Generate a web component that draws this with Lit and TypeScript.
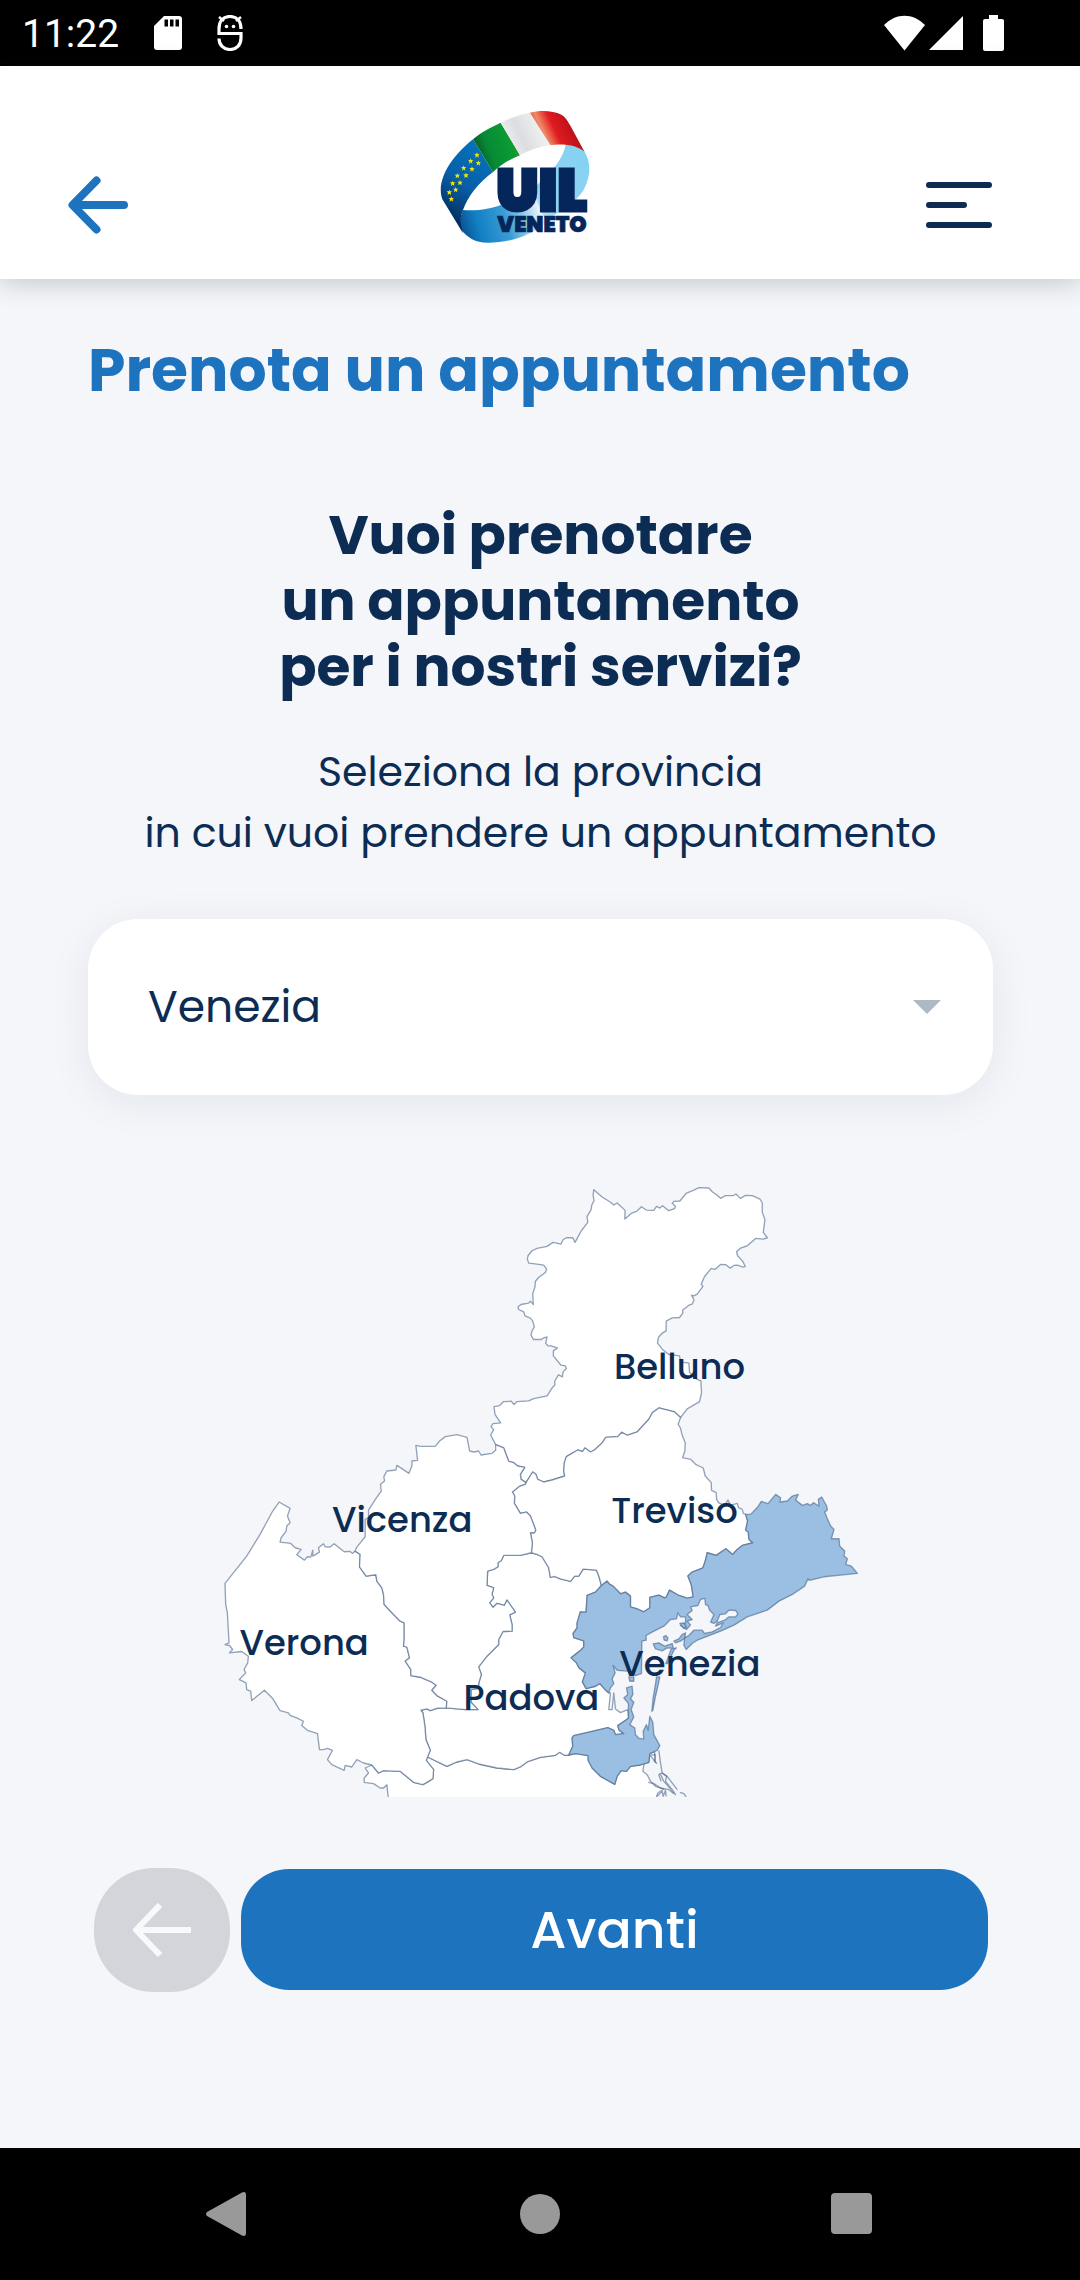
import { LitElement, html, svg, css } from "lit";
import { customElement, property, state } from "lit/decorators.js";

type Point = [number, number];

// The map is drawn on a 2040 x 1881 canvas; borders are listed per sheet and shifted into place.
const sheet = (dx: number, dy: number) => (text: string): Point[] =>
  text
    .trim()
    .split(/\s+/)
    .map((pair) => {
      const [x, y] = pair.split(",").map(Number);
      return [x + dx, y + dy] as Point;
    });
const nw = sheet(0, 0);
const ne = sheet(840, 0);
const sw = sheet(0, 930);
const se = sheet(960, 930);
const back = (points: Point[]): Point[] => [...points].reverse();
const toPoints = (...parts: Point[][]): string =>
  parts
    .flat()
    .map((p) => p.join(","))
    .join(" ");

const bellunoOuter = ne(`46,826 31,797 40,781 32,772 38,763 61,761 44,735 41,712 58,709 70,697 93,696 101,706 110,697 145,695
  160,688 200,680 216,655 223,648 223,636 234,617 246,623 248,608 258,598 255,590 242,588 219,560 219,545 231,536 212,530
  203,530 196,522 200,503 188,507 183,511 159,511 152,497 155,485 162,473 157,455 150,447 134,440 130,428 115,421 113,413
  122,406 145,402 150,396 159,406 157,375 164,352 165,337 174,326 195,310 199,300 190,288 170,285 145,282 141,270 143,260
  155,245 170,238 200,232 218,220 242,225 248,212 258,206 277,206 284,220 300,190 305,182 322,160 320,142 332,122 334,108
  341,95 338,80 340,62 365,84 388,98 400,108 410,102 434,124 433,150 442,142 452,133 470,126 483,113 497,123 520,124
  528,112 538,117 546,110 565,125 582,119 585,112 575,103 580,97 598,96 618,72 640,63 655,56 685,57 695,68 708,77 720,88
  735,80 758,80 766,75 779,88 795,79 815,80 838,90 845,102 845,130 853,152 850,175 848,190 860,206 848,210 825,208
  800,230 780,237 768,248 771,260 786,276 794,292 788,294 770,288 760,289 748,297 736,287 720,286 703,301 692,298
  672,322 662,345 667,352 650,375 640,380 633,378 640,392 636,404 624,409 606,423 607,432 597,445 575,446 557,456
  557,485 545,492 534,504 531,522 545,540 565,556 597,560 600,578 625,582 627,610 648,630 661,635 663,670 657,697
  620,719 600,745`);
const bellunoTreviso = ne(`600,745 582,728 535,716 516,730 505,750 470,788 440,798 424,789 412,802 376,804 364,822
  342,842 330,848 314,836 306,847 292,842 258,862 252,880 250,905 253,920 215,932 190,938 172,930 166,914 157,908 137,940`);
const bellunoVicenza = ne(`137,940 122,930 120,915 133,894 112,890 100,880 85,876 70,836 46,826`);
const trevisoOuter = [
  ...ne(`600,745 593,765 600,777 605,798 614,820 613,845 606,865 630,870 645,885 668,896 674,920 692,940`),
  ...se(`573,33 587,40 588,60 594,70 605,75 616,72 622,62 630,78 650,72 654,85 665,90 668,102 675,105`),
];
const trevisoVenezia = se(`675,105 681,125 675,152 683,158 685,180 697,190 665,198 650,210 636,225 616,208 587,228
  560,220 554,245 547,265 515,278 502,290 512,315 518,352 500,356 475,348 447,332 438,352 432,355 415,347 388,354 388,385
  370,397 350,388 330,382 330,350 315,338 300,343 278,320 268,315 260,305 243,318`);
const trevisoPadova = se(`243,318 236,292 228,272 188,269 175,290 163,290 150,306 120,298 102,291 90,294 85,265 65,232
  50,225 33,220`);
const trevisoVicenza = sw(`993,220 996,190 990,160 1002,160 1006,152 990,110 978,98 960,102 942,72 943,50 936,38 958,20
  975,14 977,10`);
const vicenzaPadova = sw(`993,220 960,228 910,228 903,243 893,250 893,262 880,270 862,275 860,318 880,325 875,345 880,355
  868,370 878,384 890,372 912,378 920,362 945,398 928,406 935,435 935,455 908,456 895,480 895,495 860,530 835,562
  843,585 835,612 835,626 812,630 812,668 833,690 795,690 738,685`);
const vicenzaVerona = sw(`738,685 740,665 710,648 695,632 708,617 695,608 660,593 632,588 632,570 615,545 628,535 620,503
  610,500 612,480 612,430 600,425 580,405 552,375 550,345 545,325 530,305 527,286 498,290 478,262 480,225 465,215`);
const vicenzaOuter = [
  ...sw(`465,215 470,203 495,172 495,120 505,115 505,92`),
  ...nw(`527,988 543,965 541,945 553,935 551,922 560,905 587,902 590,888 604,897 626,912 635,890 635,875 652,873 647,828
  660,831 705,831 718,815 735,802 770,796 800,804 808,845 822,848 835,845 842,857 875,852 886,843 886,826`),
];
const veronaOuter = sw(`465,215 457,222 450,216 432,217 402,193 390,203 375,202 370,193 355,205 358,218 338,230 338,212
  332,233 322,232 313,242 290,226 303,210 285,205 272,192 240,188 243,175 258,155 260,140 270,130 262,110 270,87 237,68
  218,95 180,165 140,230 75,312 77,375 82,400 87,490 75,495 88,498 98,510 88,520 125,516 145,530 143,550 132,570 137,580
  118,600 138,610 140,630 152,635 155,663 193,632 218,657 240,693 265,700 270,707 290,715 310,725 305,738 322,752
  352,762 358,810 370,810 382,806 397,812 382,840 395,855 432,872 435,857 455,862 470,840 490,850 515,856`);
const veronaRovigo = sw(`515,856 535,880 550,873 600,875 618,890 640,908 668,915 680,908 698,897 700,870 678,842 682,832`);
const veronaPadova = sw(`682,832 690,812 677,780 674,740 668,700 662,692 680,688 690,693 710,686 738,685`);
const padovaRovigo = [
  ...sw(`682,832 740,860 770,847 800,840 835,853 890,865 940,870`),
  ...se(`0,862 20,847 60,833 105,827 118,818 132,827 145,826`),
];
const veneziaWest = se(`243,318 225,338 200,348 197,398 180,397 170,430 170,445 158,462 160,474 190,484 190,502 183,510
  152,535 168,550 176,565 195,580 186,607 197,627 225,620 238,612 252,628 265,640`);
const padovaCoast = se(`265,640 270,640 265,690 275,690 280,640 285,688 300,699 322,690 324,716 292,738 296,752 310,762
  285,765 280,752 262,744 215,755 160,768 155,775 157,800 145,826`);
const rovigoVenezia = se(`145,826 165,822 203,828 203,842 215,865 240,890 283,914 290,890 302,873 318,875 330,860
  360,856 385,848 388,822`);
const rovigoCoast = se(`388,822 402,816 405,848 390,828 370,855 367,875 380,885 390,905 405,920 430,928 412,940 405,960`);

const veneziaOuter = se(`675,105 690,105 712,82 722,66 742,73 765,45 780,55 778,68 800,65 815,50 833,45 825,62 845,78
  860,73 870,78 878,70 895,80 893,60 903,53 918,80 920,92 912,98 920,118 930,140 940,150 932,178 955,178 957,200 972,215
  970,230 980,238 975,255 992,260 1010,282 960,287 910,292 866,303 862,298 852,320 815,345 775,365 740,392 680,412
  640,437 600,455 530,482 515,492 497,510 490,497 492,475 505,468 520,452 545,452 552,462 575,457 600,444 608,430
  585,440 590,430 612,422 625,412 645,412 652,403 645,393 625,392 615,403 598,405 590,425 580,432
  570,428 580,405 567,392 562,378 555,376 553,357 540,360 532,378 510,382 515,393
  500,405 515,420 500,425 510,436 498,450 480,438 495,430 495,412 480,412 472,400 468,418 450,420 430,440 400,455 377,468
  377,482 364,485 363,582 345,588 330,575 310,574 290,572 278,558 284,580 275,598 280,612 270,625 265,640`);
const veneziaSouth = se(`145,826 157,800 155,775 160,768 215,755 262,744 280,752 285,765 310,762 296,752 292,738 324,716
  324,672 310,655 322,645 318,625 335,620 337,645 330,658 340,668 332,690 340,712 328,735 343,745 345,765 355,776
  370,778 368,755 378,735 383,752 388,710 397,728 400,765 418,798 410,812 388,822 385,848 360,856 330,860 318,875 302,873
  290,890 283,914 240,890 215,865 203,842 203,828 165,822`);
const islands = [
  se(`398,493 415,490 432,500 455,492 458,505 438,506 425,514 405,508`),
  se(`460,485 475,478 485,465 495,460 493,475 480,485 465,490`),
  se(`429,472 436,468 442,475 440,484 431,482`),
  se(`478,432 490,430 497,442 490,447`),
  se(`468,505 460,512 452,530 442,552 436,552 444,530 452,508`),
  se(`418,592 412,620 405,650 397,692 394,695 398,655 404,620 408,592`),
  se(`325,592 340,592 340,605 328,605`),
];
const delta = [
  se(`415,812 420,850 425,880 440,890 470,930`),
  se(`418,880 430,905 465,945 455,930 435,905 438,890 425,880 415,885 422,905`),
  se(`383,908 400,912 420,925 445,930 460,942`),
  se(`392,826 404,825 402,845 410,852`),
  se(`478,938 490,942 497,952`),
  se(`410,950 425,935 428,950 435,932 437,950`),
];

interface Province {
  name: string;
  shapes: string[];
  x: number;
  y: number;
}

const provinces: Province[] = [
  {
    name: "Belluno",
    shapes: [toPoints(bellunoOuter, bellunoTreviso, bellunoVicenza)],
    x: 1437,
    y: 628,
  },
  {
    name: "Padova",
    shapes: [toPoints(veneziaWest, padovaCoast, back(padovaRovigo), veronaPadova, back(vicenzaPadova), back(trevisoPadova))],
    x: 993,
    y: 1620,
  },
  {
    name: "Treviso",
    shapes: [toPoints(trevisoOuter, trevisoVenezia, trevisoPadova, trevisoVicenza, back(bellunoTreviso))],
    x: 1422,
    y: 1062,
  },
  {
    name: "Venezia",
    shapes: [
      toPoints(veneziaOuter, back(veneziaWest), back(trevisoVenezia)),
      toPoints(veneziaSouth),
      ...islands.map((i) => toPoints(i)),
    ],
    x: 1468,
    y: 1520,
  },
  {
    name: "Verona",
    shapes: [toPoints(veronaOuter, veronaRovigo, veronaPadova, vicenzaVerona)],
    x: 312,
    y: 1455,
  },
  {
    name: "Vicenza",
    shapes: [toPoints(vicenzaOuter, back(bellunoVicenza), back(trevisoVicenza), vicenzaPadova, vicenzaVerona)],
    x: 606,
    y: 1087,
  },
];

const rovigo = toPoints(
  sw(`572,980 563,945 560,915 550,925 540,925 520,912 492,908 492,895 505,880 495,865 515,856`),
  veronaRovigo,
  padovaRovigo,
  rovigoVenezia,
  rovigoCoast,
  se(`405,980`),
);

@customElement("status-bar")
export class StatusBar extends LitElement {
  static styles = css`
    :host {
      display: flex;
      align-items: center;
      justify-content: space-between;
      height: 66px;
      padding: 0 76px 0 22px;
      background: #000;
      color: #fff;
      font-family: Roboto, sans-serif;
      font-size: 39px;
      line-height: 66px;
    }
    .group {
      display: flex;
      align-items: center;
    }
    .left {
      gap: 35px;
    }
    .time {
      padding-top: 2px;
    }
    .signal {
      margin-left: 4px;
      margin-right: 20px;
    }
    svg {
      display: block;
    }
  `;
  render() {
    return html`
      <div class="group left">
        <span class="time">11:22</span>
        <svg width="28" height="36" viewBox="0 0 28 36" aria-hidden="true">
          <path d="M10 1h15a3 3 0 0 1 3 3v28a3 3 0 0 1-3 3H3a3 3 0 0 1-3-3V11z" fill="#fff" />
          <path d="M10.500 4.500h3.500v7h-3.500zM16 4.500h3.500v7H16zM21.500 4.500H25v7h-3.500z" fill="#000" />
        </svg>
        <svg width="26" height="36" viewBox="0 0 26 36" fill="none" stroke="#fff" stroke-width="3.200" aria-hidden="true">
          <path d="M24 14c0-8-4-12.500-11-12.500S2 6 2 14v4.500h22V23c0 7-4.500 11.500-11 11.500S2 30 2 23.500" />
          <path d="M2 2l5 4M24 2l-5 4" stroke-width="2.500" />
          <circle cx="9.500" cy="11.500" r="1.800" fill="#fff" stroke="none" />
          <circle cx="16.500" cy="11.500" r="1.800" fill="#fff" stroke="none" />
        </svg>
      </div>
      <div class="group">
        <svg width="41" height="36" viewBox="0 0 41 36" fill="#fff" aria-hidden="true">
          <path d="M0 10C12-2.500 29-2.500 41 10L20.500 35.500z" />
        </svg>
        <svg class="signal" width="34" height="36" viewBox="0 0 34 36" fill="#fff" aria-hidden="true">
          <path d="M34 1v34H0z" />
        </svg>
        <svg width="21" height="36" viewBox="0 0 21 36" fill="#fff" aria-hidden="true">
          <path d="M6 0h9v4h4a2 2 0 0 1 2 2v28a2 2 0 0 1-2 2H2a2 2 0 0 1-2-2V6a2 2 0 0 1 2-2h4z" />
        </svg>
      </div>
    `;
  }
}

@customElement("brand-logo")
export class BrandLogo extends LitElement {
  static styles = css`
    :host {
      display: block;
    }
    svg {
      display: block;
    }
    .name {
      font-family: Poppins, Inter, sans-serif;
      font-weight: 900;
      fill: #04265a;
      stroke: #04265a;
      text-anchor: middle;
    }
    .union {
      font-size: 176px;
      stroke-width: 9;
    }
    .region {
      font-size: 66px;
      stroke-width: 2;
    }
  `;
  render() {
    const stars = [
      [172, 177], [176, 201], [153, 195], [157, 219], [132, 216], [139, 238], [113, 239], [121, 260], [99, 262],
      [108, 281], [89, 289], [95, 309],
    ];
    return html`
      <svg width="152" height="134" viewBox="58 42 456 402" role="img" aria-label="UIL Veneto">
        <defs>
          <linearGradient id="eu" x1="0.700" y1="0" x2="0.300" y2="1">
            <stop offset="0" stop-color="#0673bd" />
            <stop offset="0.500" stop-color="#075fa8" />
            <stop offset="1" stop-color="#02234e" />
          </linearGradient>
          <linearGradient id="band" gradientUnits="userSpaceOnUse" x1="120" y1="400" x2="370" y2="330">
            <stop offset="0" stop-color="#0a4f8c" />
            <stop offset="0.220" stop-color="#1180c4" />
            <stop offset="0.550" stop-color="#3c9dd6" />
            <stop offset="1" stop-color="#fff" />
          </linearGradient>
          <linearGradient id="sky" gradientUnits="userSpaceOnUse" x1="490" y1="180" x2="280" y2="370">
            <stop offset="0" stop-color="#86d2f2" />
            <stop offset="0.550" stop-color="#8fd3f2" />
            <stop offset="1" stop-color="#e4f4fc" />
          </linearGradient>
          <linearGradient id="green" x1="0" y1="0.700" x2="1" y2="0.300">
            <stop offset="0" stop-color="#064a1c" />
            <stop offset="0.350" stop-color="#078a35" />
            <stop offset="0.750" stop-color="#0a9a33" />
            <stop offset="1" stop-color="#36a02c" />
          </linearGradient>
          <linearGradient id="white" x1="0" y1="0.700" x2="1" y2="0.300">
            <stop offset="0" stop-color="#f6f6f7" />
            <stop offset="0.400" stop-color="#dcdde1" />
            <stop offset="1" stop-color="#f8f8f8" />
          </linearGradient>
          <linearGradient id="red" x1="0" y1="0.600" x2="1" y2="0.250">
            <stop offset="0" stop-color="#d8231d" />
            <stop offset="0.250" stop-color="#f08a67" />
            <stop offset="0.450" stop-color="#e01b20" />
            <stop offset="1" stop-color="#9c0a12" />
          </linearGradient>
        </defs>
        <path
          d="M438 147C430 185 405 215 385 235C340 285 290 315 245 328L230 420C330 405 450 345 490 285C510 250 518 205 495 168C480 152 460 147 438 147z"
          fill="url(#sky)"
        />
        <path
          d="M130 342C175 345 215 338 245 326L345 300L380 380C330 420 270 440 205 440C165 440 145 425 125 402C118 380 122 358 130 342z"
          fill="url(#band)"
        />
        <path
          d="M160 130L220 228C175 262 145 300 130 342C122 358 120 380 130 412L68 310C50 260 85 190 160 130z"
          fill="url(#eu)"
        />
        <path d="M160 130C185 108 215 93 243 80L301 178C270 190 245 205 220 228z" fill="url(#green)" />
        <path d="M243 80C270 66 305 54 331 50L392 147C360 152 325 163 301 178z" fill="url(#white)" />
        <path d="M331 50C360 42 400 43 425 56C440 64 447 78 495 168C475 148 435 142 392 147z" fill="url(#red)" />
        ${stars.map(
          ([x, y]) => svg`<path transform="translate(${x} ${y})"
            d="M0-8L2-3H8L4 1L5 8L0 4L-5 8L-4 1L-8-3H-2z" fill="#f3e600" />`,
        )}
        <text class="name union" x="366" y="345">UIL</text>
        <text class="name region" x="367" y="408">VENETO</text>
      </svg>
    `;
  }
}

@customElement("app-header")
export class AppHeader extends LitElement {
  static styles = css`
    :host {
      display: grid;
      grid-template-columns: 1fr auto 1fr;
      align-items: center;
      height: 213px;
      box-sizing: border-box;
      padding: 8px 88px 0 68px;
      background: #fff;
      box-shadow: 0 4px 24px rgba(20, 30, 50, 0.22);
      position: relative;
    }
    button {
      display: block;
      padding: 56px 0 0;
      border: 0;
      background: none;
    }
    .back {
      justify-self: start;
    }
    brand-logo {
      margin-right: 30px;
    }
    .menu {
      justify-self: end;
    }
    svg {
      display: block;
    }
  `;
  render() {
    return html`
      <button class="back" aria-label="Indietro">
        <svg width="60" height="58" viewBox="0 0 60 58" fill="none" stroke="#1e73be" stroke-width="8" stroke-linecap="round" stroke-linejoin="round">
          <path d="M28.500 4.500L4.500 29L28.500 53.500M6 29H56" />
        </svg>
      </button>
      <brand-logo></brand-logo>
      <button class="menu" aria-label="Menu">
        <svg width="66" height="46" viewBox="0 0 66 46" fill="none" stroke="#0c2c54" stroke-width="6" stroke-linecap="round">
          <path d="M3 3H63M3 23H38M3 43H63" />
        </svg>
      </button>
    `;
  }
}

@customElement("province-map")
export class ProvinceMap extends LitElement {
  @property() selected = "";

  static styles = css`
    :host {
      display: block;
    }
    svg {
      display: block;
      width: 100%;
    }
    .shape {
      fill: #fff;
      stroke: #3d5a80;
      stroke-opacity: 0.550;
      stroke-width: 4;
      stroke-linejoin: round;
    }
    .chosen {
      fill: #9abfe3;
    }
    .line {
      fill: none;
    }
    .label {
      font-family: Poppins, Inter, sans-serif;
      font-weight: 500;
      font-size: 106px;
      fill: #0c2c54;
      text-anchor: middle;
    }
  `;
  render() {
    return html`
      <svg viewBox="0 0 2040 1881" role="img" aria-label="Province del Veneto">
        <polygon class="shape" points=${rovigo}></polygon>
        ${provinces.map((p) =>
          p.shapes.map(
            (points) =>
              svg`<polygon class=${p.name === this.selected ? "shape chosen" : "shape"} points=${points}></polygon>`,
          ),
        )}
        ${delta.map((d) => svg`<polyline class="shape line" points=${toPoints(d)}></polyline>`)}
        ${provinces.map((p) => svg`<text class="label" x=${p.x} y=${p.y}>${p.name}</text>`)}
      </svg>
    `;
  }
}

@customElement("navigation-bar")
export class NavigationBar extends LitElement {
  static styles = css`
    :host {
      display: grid;
      grid-template-columns: repeat(3, 1fr);
      align-items: center;
      height: 132px;
      box-sizing: border-box;
      padding: 0 72px;
      background: #000;
    }
    button {
      justify-self: center;
      padding: 0;
      border: 0;
      background: none;
    }
    svg {
      display: block;
    }
  `;
  render() {
    return html`
      <button aria-label="Indietro">
        <svg width="44" height="46" viewBox="0 0 44 46" fill="#999">
          <path d="M1 21L36 1.500Q40 0 40 4V42Q40 46 36 44.500L1 25Q-1 23 1 21z" />
        </svg>
      </button>
      <button aria-label="Home">
        <svg width="42" height="42" viewBox="0 0 42 42" fill="#999"><circle cx="21" cy="21" r="20" /></svg>
      </button>
      <button aria-label="Recenti">
        <svg width="42" height="42" viewBox="0 0 42 42" fill="#999"><rect width="41" height="41" rx="4" /></svg>
      </button>
    `;
  }
}

@customElement("app-root")
export class AppRoot extends LitElement {
  @state() private province = "Venezia";

  static styles = css`
    :host {
      display: flex;
      flex-direction: column;
      min-height: 100vh;
      background: #f4f6fa;
      color: #0c2c54;
      font-family: Poppins, Inter, sans-serif;
    }
    main {
      flex: 1;
      display: flex;
      flex-direction: column;
      padding: 58px 87px 0 88px;
    }
    h1 {
      margin: 0;
      color: #1e73be;
      font-size: 60px;
      line-height: 66px;
      font-weight: 700;
    }
    h2 {
      margin: 99px 0 0;
      text-align: center;
      font-size: 55px;
      line-height: 66px;
      font-weight: 700;
    }
    .prompt {
      display: block;
      margin: 41px 0 0;
      text-align: center;
      font-size: 41px;
      line-height: 61px;
    }
    .field {
      display: grid;
      align-items: center;
      margin-top: 56px;
    }
    .field select,
    .field svg {
      grid-area: 1 / 1;
    }
    .field svg {
      justify-self: end;
      margin-right: 52px;
      pointer-events: none;
    }
    select {
      appearance: none;
      width: 100%;
      height: 176px;
      padding: 0 60px 2px;
      border: 0;
      border-radius: 50px;
      background: #fff;
      box-shadow: 0 8px 44px rgba(20, 30, 50, 0.07);
      color: inherit;
      font: inherit;
      font-size: 44px;
    }
    province-map {
      width: 75.222%;
      margin: 74px auto 0;
    }
    .actions {
      display: grid;
      grid-template-columns: 136px 1fr;
      align-items: center;
      gap: 11px;
      margin: 71px 0 71px;
      padding: 0 5px 0 6px;
    }
    .actions button {
      display: flex;
      align-items: center;
      justify-content: center;
      border: 0;
      padding: 0;
      font: inherit;
    }
    .previous {
      height: 124px;
      border-radius: 60px;
      background: #d4d5da;
    }
    .next {
      height: 121px;
      border-radius: 48px;
      background: #1e73be;
    }
    .actions .next {
      color: #fff;
      font-size: 52px;
      font-weight: 500;
    }
  `;

  private choose(event: Event) {
    this.province = (event.target as HTMLSelectElement).value;
  }

  render() {
    return html`
      <status-bar></status-bar>
      <app-header></app-header>
      <main>
        <h1>Prenota un appuntamento</h1>
        <h2>Vuoi prenotare<br />un appuntamento<br />per i nostri servizi?</h2>
        <label class="prompt" for="province">Seleziona la provincia<br />in cui vuoi prendere un appuntamento</label>
        <div class="field">
          <select id="province" @change=${this.choose}>
            ${provinces.map((p) => html`<option ?selected=${p.name === this.province}>${p.name}</option>`)}
          </select>
          <svg width="28" height="14" viewBox="0 0 28 14" aria-hidden="true"><path d="M0 0H28L14 14z" fill="#aeb9c6" /></svg>
        </div>
        <province-map .selected=${this.province}></province-map>
        <div class="actions">
          <button class="previous" aria-label="Passo precedente">
            <svg width="60" height="54" viewBox="0 0 60 54" fill="none" stroke="#f8f9fb" stroke-width="6" stroke-linejoin="round">
              <path d="M28 2L4 27L28 52M4 27H59" />
            </svg>
          </button>
          <button class="next">Avanti</button>
        </div>
      </main>
      <navigation-bar></navigation-bar>
    `;
  }
}
